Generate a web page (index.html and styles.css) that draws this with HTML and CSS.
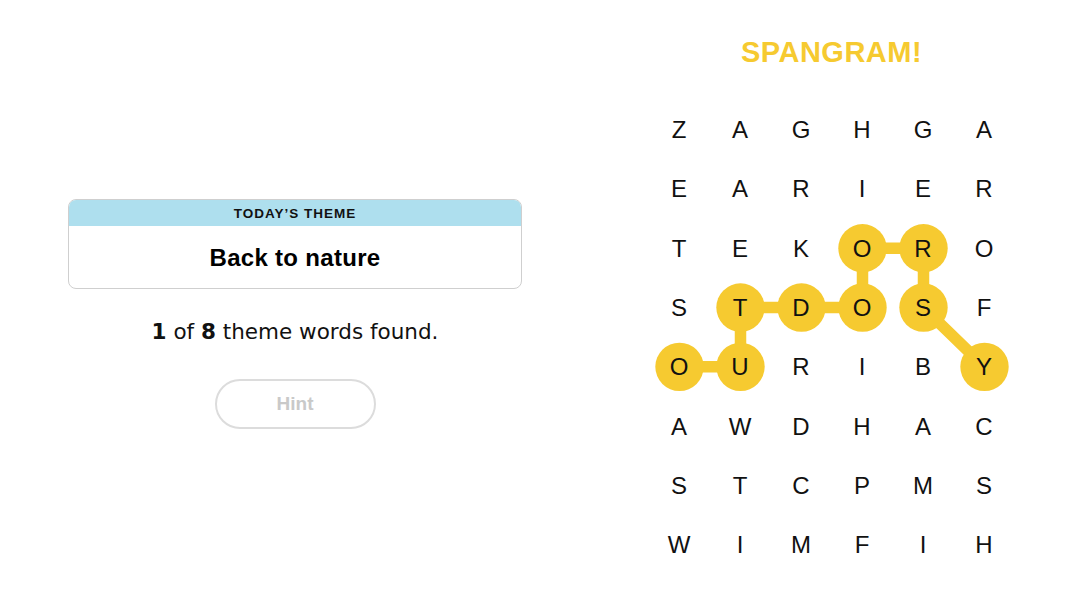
FILE: index.html
```html
<!DOCTYPE html>
<html>
<head>
<meta charset="utf-8">
<link rel="stylesheet" href="styles.css">
</head>
<body>
<main class="page">
  <section class="left">
    <div class="theme-card">
      <div class="theme-head">TODAY’S THEME</div>
      <div class="theme-body">Back to nature</div>
    </div>
    <p class="progress"><b>1</b> of <b>8</b> theme words found.</p>
    <button class="hint">Hint</button>
  </section>
  <section class="right">
    <h1 class="title">SPANGRAM!</h1>
    <div class="board">
      <svg class="path" viewBox="0 0 366 474.4" width="366" height="474.4">
        <polyline points="30.5,266.85 91.5,266.85 91.5,207.55 152.5,207.55 213.5,207.55 213.5,148.25 274.5,148.25 274.5,207.55 335.5,266.85" fill="none" stroke="#f6ca30" stroke-width="11.5" stroke-linejoin="round"/>
        <g fill="#f6ca30">
          <circle cx="30.5" cy="266.85" r="24.2"/>
          <circle cx="91.5" cy="266.85" r="24.2"/>
          <circle cx="91.5" cy="207.55" r="24.2"/>
          <circle cx="152.5" cy="207.55" r="24.2"/>
          <circle cx="213.5" cy="207.55" r="24.2"/>
          <circle cx="213.5" cy="148.25" r="24.2"/>
          <circle cx="274.5" cy="148.25" r="24.2"/>
          <circle cx="274.5" cy="207.55" r="24.2"/>
          <circle cx="335.5" cy="266.85" r="24.2"/>
        </g>
      </svg>
      <span>Z</span><span>A</span><span>G</span><span>H</span><span>G</span><span>A</span>
      <span>E</span><span>A</span><span>R</span><span>I</span><span>E</span><span>R</span>
      <span>T</span><span>E</span><span>K</span><span>O</span><span>R</span><span>O</span>
      <span>S</span><span>T</span><span>D</span><span>O</span><span>S</span><span>F</span>
      <span>O</span><span>U</span><span>R</span><span>I</span><span>B</span><span>Y</span>
      <span>A</span><span>W</span><span>D</span><span>H</span><span>A</span><span>C</span>
      <span>S</span><span>T</span><span>C</span><span>P</span><span>M</span><span>S</span>
      <span>W</span><span>I</span><span>M</span><span>F</span><span>I</span><span>H</span>
    </div>
  </section>
</main>
</body>
</html>
```
FILE: styles.css
```css
* { box-sizing: border-box; }
html, body {
  margin: 0;
  padding: 0;
  background: #fff;
  width: 1080px;
  height: 608px;
  overflow: hidden;
  font-family: "Liberation Sans", Arial, sans-serif;
  color: #000;
}
.page {
  display: flex;
  width: 1080px;
  height: 608px;
}
.left {
  width: 590px;
  display: flex;
  flex-direction: column;
  align-items: center;
  padding-top: 199px;
}
.theme-card {
  width: 454px;
  border: 1px solid #cfcfcf;
  border-radius: 8px;
  overflow: hidden;
}
.theme-head {
  background: #aedfee;
  height: 26px;
  display: flex;
  align-items: center;
  justify-content: center;
  font-size: 13.5px;
  font-weight: bold;
  letter-spacing: 1px;
  color: #111;
}
.theme-body {
  height: 62px;
  display: flex;
  align-items: center;
  justify-content: center;
  font-size: 24px;
  font-weight: bold;
  letter-spacing: 0.3px;
  padding-top: 2px;
}
.progress {
  margin: 29px 0 0;
  font-family: "DejaVu Sans", "Liberation Sans", sans-serif;
  font-size: 21.5px;
  line-height: 28px;
  color: #111;
}
.hint {
  margin-top: 33px;
  width: 161px;
  height: 50px;
  border: 2px solid #dcdcdc;
  border-radius: 25px;
  background: #fff;
  color: #c9c9c9;
  font-family: "Liberation Sans", Arial, sans-serif;
  font-size: 19px;
  font-weight: bold;
}
.right {
  width: 483px;
  display: flex;
  flex-direction: column;
  align-items: center;
  padding-top: 34px;
}
.title {
  margin: 0;
  height: 66.4px;
  font-size: 29px;
  line-height: 36px;
  font-weight: bold;
  color: #f6ca30;
  letter-spacing: 0.5px;
}
.board {
  position: relative;
  display: grid;
  grid-template-columns: repeat(6, 61px);
  grid-auto-rows: 59.3px;
  width: 366px;
}
.board .path {
  position: absolute;
  left: 0;
  top: 0;
}
.board span {
  position: relative;
  display: flex;
  align-items: center;
  justify-content: center;
  font-size: 24px;
  color: #111;
}
```
